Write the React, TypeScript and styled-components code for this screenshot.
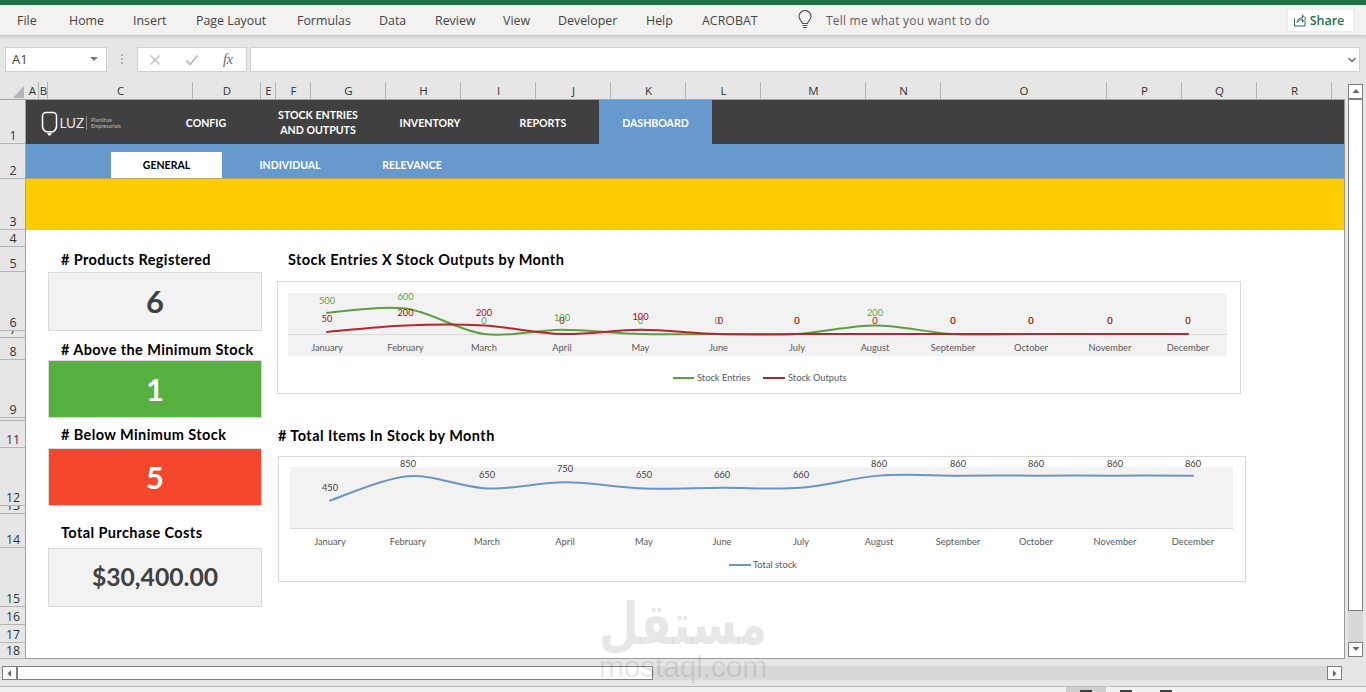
import React from "react";
import styled, { createGlobalStyle } from "styled-components";

const Global = createGlobalStyle`
  html, body { margin: 0; padding: 0; background: #e6e6e6; }
  * { box-sizing: border-box; }
`;

const Page = styled.div`
  width: 1366px; height: 692px; overflow: hidden; position: relative;
  display: flex; flex-direction: column; background: #e6e6e6;
  font-family: "Open Sans", "Noto Sans", sans-serif;
`;
const GreenStrip = styled.div`height: 5px; background: #217346;`;
const Ribbon = styled.div`
  height: 30px; background: #f3f2f1; display: flex; align-items: center;
  padding-left: 17px; position: relative; z-index: 1;
  box-shadow: 0 2px 3px rgba(0,0,0,.14);
`;
const RibbonTab = styled.div<{ $w: number }>`
  width: ${p => p.$w}px; flex: none; font-size: 12.4px; color: #444; white-space: nowrap;
`;
const TellMe = styled.div`
  display: flex; align-items: center; gap: 13px; width: 490px; flex: none;
  font-size: 12px; color: #5f5f5f; letter-spacing: .22px;
`;
const ShareButton = styled.div`
  width: 67px; height: 23px; background: #fff; border: 1px solid #ececec; border-radius: 2px;
  display: flex; align-items: center; justify-content: center; gap: 3px; padding-right: 4px;
  color: #217346; font-size: 12.5px; font-weight: 600;
`;

const FormulaRow = styled.div`
  height: 45px; display: flex; align-items: flex-start; padding: 12px 6px 0 5px;
`;
const Field = styled.div`
  height: 25px; background: #fff; border: 1px solid #d2d2d2;
  display: flex; align-items: center;
`;
const NameBox = styled(Field)`
  width: 102px; flex: none; padding: 0 8px 2px 6px; justify-content: space-between;
  font-size: 13px; color: #444;
`;
const Caret = styled.span`
  width: 0; height: 0; border-left: 4px solid transparent; border-right: 4px solid transparent;
  border-top: 4px solid #7b7b7b;
`;
const Dots = styled.div`
  width: 30px; flex: none; display: flex; flex-direction: column; align-items: center; gap: 2px; padding-top: 7px;
`;
const Dot = styled.span`width: 2px; height: 2px; background: #b4b4b4;`;
const FxBox = styled(Field)`
  width: 110px; flex: none; margin-right: 3px; justify-content: space-between; padding: 0 13px 0 11px;
`;
const Fx = styled.span`
  font-family: "Liberation Serif", serif; font-style: italic; font-size: 14px; color: #666;
`;
const FormulaInput = styled(Field)`
  width: 1110px; flex: none; justify-content: flex-end; padding-right: 2px;
`;

const Grid = styled.div`display: flex; height: 579px; flex: none;`;
const GridMain = styled.div`width: 1345px; flex: none; display: flex; flex-direction: column;`;

const ColumnBar = styled.div`
  height: 20px; flex: none; display: flex; border-bottom: 1px solid #a3a3a3; background: #e6e6e6;
`;
const Corner = styled.div`
  width: 26px; flex: none; display: flex; align-items: flex-end; justify-content: flex-end;
  padding: 0 2px 1px 0;
`;
const ColumnCell = styled.div<{ $w: number }>`
  width: ${p => p.$w}px; flex: none; display: flex; align-items: center; justify-content: center;
  font-size: 11.5px; color: #333; position: relative; line-height: 18px; padding-top: 3px;
  &::after { content: ""; position: absolute; right: 0; top: 2px; bottom: 0; width: 1px; background: #b4b4b4; }
`;

const Workspace = styled.div`height: 559px; flex: none; display: flex;`;
const RowBar = styled.div`width: 26px; flex: none; display: flex; flex-direction: column; background: #e6e6e6; border-right: 1px solid #a3a3a3;`;
const RowCell = styled.div<{ $h: number }>`
  height: ${p => p.$h}px; flex: none; overflow: hidden; display: flex; align-items: flex-end; justify-content: center;
  border-bottom: 1px solid #b4b4b4; font-size: 12.4px; line-height: 14px; color: #333; padding-left: 1px;
`;

const Sheet = styled.div`
  width: 1319px; flex: none; background: #fff; display: flex; flex-direction: column; overflow: hidden;
  border-bottom: 1px solid #9a9a9a; border-right: 1px solid #9a9a9a;
  font-family: Lato, "Open Sans", sans-serif;
`;
const NavBar = styled.div`height: 44px; flex: none; background: #404040; display: flex;`;
const Brand = styled.div`width: 123px; flex: none; display: flex; align-items: center; padding-left: 15px; padding-top: 1px;`;
const NavItem = styled.div<{ $w: number; $active?: boolean }>`
  width: ${p => p.$w}px; flex: none; display: flex; align-items: center; justify-content: center; text-align: center;
  color: #fff; font-weight: 700; font-size: 10.6px; line-height: 15px; padding-top: 2px;
  background: ${p => (p.$active ? "#6699cc" : "transparent")};
`;
const SubNav = styled.div`
  height: 35px; flex: none; background: #6699cc; display: flex; padding-left: 85px; align-items: flex-end;
  border-bottom: 1px solid #b9a768;
`;
const SubTab = styled.div<{ $w: number; $active?: boolean }>`
  width: ${p => p.$w}px; height: 26px; flex: none; display: flex; align-items: center; justify-content: center;
  font-weight: 700; font-size: 10.5px;
  color: ${p => (p.$active ? "#000" : "#fff")};
  background: ${p => (p.$active ? "#fff" : "transparent")};
`;
const Banner = styled.div`height: 51px; flex: none; background: #ffcc00;`;
const Body = styled.div`flex: 1; display: flex; padding-left: 22px;`;
const Stats = styled.div`width: 214px; flex: none; display: flex; flex-direction: column;`;
const StatLabel = styled.div<{ $h: number; $top: number }>`
  height: ${p => p.$h}px; margin-top: ${p => p.$top}px; padding-left: 13px; display: flex; align-items: center;
  font-weight: 700; font-size: 14.5px; letter-spacing: .4px; color: #000; white-space: nowrap;
`;
const StatCard = styled.div<{ $h: number; $bg: string; $fg: string; $size: number }>`
  height: ${p => p.$h}px; background: ${p => p.$bg}; color: ${p => p.$fg};
  border: 1px solid #dadada; display: flex; align-items: center; justify-content: center;
  font-weight: 700; font-size: ${p => p.$size}px; line-height: 1;
`;
const Charts = styled.div`margin-left: 15px; padding-top: 17px; display: flex; flex-direction: column;`;
const ChartTitle = styled.div<{ $left: number; $top: number; $h: number }>`
  height: ${p => p.$h}px; margin-top: ${p => p.$top}px; padding-left: ${p => p.$left}px; display: flex; align-items: center;
  font-weight: 700; font-size: 14.5px; letter-spacing: .43px; color: #000; white-space: nowrap;
`;
const ChartFrame = styled.div<{ $w: number; $h: number; $left: number; $top: number }>`
  width: ${p => p.$w}px; height: ${p => p.$h}px; margin-left: ${p => p.$left}px; margin-top: ${p => p.$top}px;
  border: 1px solid #d9d9d9; background: #fff;
`;
const ChartSvg = styled.svg`display: block; width: 100%; height: 100%;`;
const ChartText = styled.text<{ $fill: string }>`
  font-family: Lato, "Open Sans", sans-serif; font-size: 9.3px; fill: ${p => p.$fill};
`;

const VScroll = styled.div`
  flex: 1; display: flex; flex-direction: column; padding: 4px 3px 2px 3px; background: #e6e6e6;
`;
const ScrollButton = styled.div<{ $vertical?: boolean }>`
  flex: none; background: #fff; border: 1px solid #7f7f7f; display: flex; align-items: center; justify-content: center;
  width: ${p => (p.$vertical ? "100%" : "15px")}; height: ${p => (p.$vertical ? "15px" : "100%")};
`;
const VThumb = styled.div`flex: none; height: 513px; background: #fff; border: 1px solid #7f7f7f; border-top-width: 2px; margin-top: -1px;`;
const VTrack = styled.div`flex: 1; background: #d8d8d8;`;
const HScrollRow = styled.div`
  height: 28px; flex: none; display: flex; padding: 7px 24px 6px 2px; background: #e6e6e6;
  border-bottom: 1px solid #bdbdbd;
`;
const HThumb = styled.div`width: 636px; flex: none; background: #fff; border: 1px solid #7f7f7f;`;
const HTrack = styled.div`flex: 1; background: #d8d8d8;`;
const StatusBar = styled.div`flex: 1; background: #f1f1f1; display: flex; padding-left: 1066px;`;
const ViewButton = styled.div<{ $active?: boolean }>`
  width: 40px; display: flex; justify-content: center; align-items: flex-start; padding-top: 3px;
  background: ${p => (p.$active ? "#cfcfcf" : "transparent")};
`;
const ViewMark = styled.span`width: 12px; height: 2px; background: #3f3f3f;`;

const Watermark = styled.div`
  position: absolute; left: 600px; top: 594px; width: 166px; display: flex; flex-direction: column; align-items: center;
  color: rgba(60,60,60,.12); pointer-events: none; z-index: 5; line-height: 1;
`;
const WatermarkArabic = styled.div`
  font-family: "DejaVu Sans", sans-serif; font-weight: 700; font-size: 46px; line-height: 60px; height: 60px; white-space: nowrap;
  transform: scaleY(1.25);
`;
const WatermarkLatin = styled.div`
  font-family: "Liberation Sans", sans-serif; font-size: 30px; line-height: 26px; white-space: nowrap; letter-spacing: -.2px;
`;

const tabs: [string, number][] = [
  ["File", 52], ["Home", 64], ["Insert", 63], ["Page Layout", 101], ["Formulas", 82], ["Data", 56],
  ["Review", 68], ["View", 55], ["Developer", 88], ["Help", 56], ["ACROBAT", 95],
];
const columns: [string, number][] = [
  ["A", 13], ["B", 9], ["C", 145], ["D", 68], ["E", 15], ["F", 35], ["G", 75], ["H", 75], ["I", 75], ["J", 75],
  ["K", 75], ["L", 75], ["M", 105], ["N", 75], ["O", 166], ["P", 75], ["Q", 75], ["R", 75],
];
const rows = [44, 35, 51, 17, 25, 59, 7, 22, 58, 3, 27, 58, 8, 34, 59, 18, 18, 16];
const months = ["January", "February", "March", "April", "May", "June", "July", "August", "September", "October", "November", "December"];

type Pt = [number, number];
function smooth(pts: Pt[]): string {
  let d = `M${pts[0][0]} ${pts[0][1]}`;
  for (let i = 0; i < pts.length - 1; i++) {
    const p0 = pts[Math.max(i - 1, 0)], p1 = pts[i], p2 = pts[i + 1], p3 = pts[Math.min(i + 2, pts.length - 1)];
    const c1: Pt = [p1[0] + (p2[0] - p0[0]) / 6, p1[1] + (p2[1] - p0[1]) / 6];
    const c2: Pt = [p2[0] - (p3[0] - p1[0]) / 6, p2[1] - (p3[1] - p1[1]) / 6];
    d += ` C${c1[0].toFixed(1)} ${c1[1].toFixed(1)} ${c2[0].toFixed(1)} ${c2[1].toFixed(1)} ${p2[0]} ${p2[1]}`;
  }
  return d;
}

interface Series { color: string; labelColor: string; width?: number; ys: number[]; values: number[]; labelYs: number[]; labelDx?: Record<number, number>; }
interface ChartProps {
  box: [number, number, number, number];
  plot: [number, number, number, number];
  axisY: number; xs: number[]; monthY: number;
  series: Series[];
  legend: { color: string; x1: number; x2: number; tx: number; label: string }[];
  legendY: number;
}

function LineChart({ box, plot, axisY, xs, monthY, series, legend, legendY }: ChartProps) {
  const [bx, by, bw, bh] = box;
  return (
    <ChartSvg viewBox={`${bx + 1} ${by + 1} ${bw - 2} ${bh - 2}`}>
      <rect x={plot[0]} y={plot[1]} width={plot[2]} height={plot[3]} fill="#f2f2f2" />
      <line x1={plot[0]} x2={plot[0] + plot[2]} y1={axisY} y2={axisY} stroke="#d9d9d9" strokeWidth="1" />
      {series.map(s => (
        <path key={s.color} d={smooth(s.ys.map((y, i) => [xs[i], y] as Pt))} fill="none" stroke={s.color} strokeWidth={s.width ?? 2} strokeLinecap="round" />
      ))}
      {series.map(s => s.values.map((v, i) => (
        <ChartText key={s.color + i} $fill={s.labelColor} x={xs[i] + (s.labelDx?.[i] ?? 0)} y={s.labelYs[i]} textAnchor="middle">{v}</ChartText>
      )))}
      {months.map((m, i) => (
        <ChartText key={m} $fill="#595959" x={xs[i]} y={monthY} textAnchor="middle">{m}</ChartText>
      ))}
      {legend.map(l => (
        <g key={l.label}>
          <line x1={l.x1} x2={l.x2} y1={legendY} y2={legendY} stroke={l.color} strokeWidth="2" />
          <ChartText $fill="#595959" x={l.tx} y={legendY + 3}>{l.label}</ChartText>
        </g>
      ))}
    </ChartSvg>
  );
}

const xs1 = [327, 405.5, 484, 562, 640.5, 718.5, 797, 875, 953, 1031, 1110, 1188];
const xs2 = [330, 408, 487, 565, 644, 722, 801, 879, 958, 1036, 1115, 1193];
const y0 = 334;
const entries = [500, 600, 0, 100, 0, 0, 0, 200, 0, 0, 0, 0];
const outputs = [50, 200, 200, 0, 100, 0, 0, 0, 0, 0, 0, 0];
const totals = [450, 850, 650, 750, 650, 660, 660, 860, 860, 860, 860, 860];

const chartOne: ChartProps = {
  box: [277, 281, 964, 113], plot: [288, 293, 939, 63], axisY: 334.5, xs: xs1, monthY: 351,
  series: [
    {
      color: "#5b9f40", labelColor: "#55a838", values: entries, ys: entries.map(v => y0 - v * 0.0425),
      labelYs: [303.5, 299.5, 324, 321, 324, 324, 324, 316, 324, 324, 324, 324],
      labelDx: { 5: -1 },
    },
    {
      color: "#b3272d", labelColor: "#c00000", values: outputs, ys: outputs.map(v => y0 - v * 0.0425),
      labelYs: [322, 316, 316, 324, 320, 324, 324, 324, 324, 324, 324, 324],
      labelDx: { 5: 2 },
    },
  ],
  legend: [
    { color: "#5b9f40", x1: 673, x2: 694, tx: 697, label: "Stock Entries" },
    { color: "#a52a2e", x1: 763, x2: 785, tx: 788, label: "Stock Outputs" },
  ],
  legendY: 378,
};
const chartTwo: ChartProps = {
  box: [278, 456, 968, 126], plot: [290, 467, 943, 61], axisY: 528.5, xs: xs2, monthY: 545,
  series: [{
    color: "#6f94bd", labelColor: "#404040", values: totals, ys: totals.map(v => 528 - v * 0.0609),
    labelYs: [491, 467, 478, 472, 478, 478, 478, 467, 467, 467, 467, 467],
  }],
  legend: [{ color: "#6f94bd", x1: 729, x2: 751, tx: 753, label: "Total stock" }],
  legendY: 565,
};

const Logo = () => (
  <svg width="92" height="26" viewBox="0 0 92 26" fill="none" aria-hidden="true">
    <path d="M5 2.500h7a3.500 3.500 0 0 1 3.500 3.500v10.500a6.500 6.500 0 0 1-3.500 5.300H5a6.500 6.500 0 0 1-3.500-5.300V6A3.500 3.500 0 0 1 5 2.500Z" stroke="#fff" strokeWidth="1.500" />
    <path d="M6 23h5l-1.500 2.500h-2Z" fill="#fff" />
    <text x="18.500" y="18" fontFamily="Lato, sans-serif" fontSize="13.500" fill="#e8e8e8">LUZ</text>
    <line x1="45.500" y1="6" x2="45.500" y2="20" stroke="#8a8a8a" />
    <text x="50" y="12" fontFamily="Lato, sans-serif" fontSize="5.400" fill="#bdbdbd">Planilhas</text>
    <text x="50" y="18" fontFamily="Lato, sans-serif" fontSize="5.400" fill="#bdbdbd">Empresariais</text>
  </svg>
);
const Bulb = () => (
  <svg width="16" height="20" viewBox="0 0 16 20" fill="none" stroke="#555" strokeWidth="1.100" aria-hidden="true">
    <path d="M5.500 13.500C5.200 11 2 9.800 2 6.500a6 6 0 0 1 12 0c0 3.300-3.200 4.500-3.500 7Z" />
    <path d="M5.500 15.500h5M6 17.500h4" />
  </svg>
);
const ShareIcon = () => (
  <svg width="14" height="14" viewBox="0 0 14 14" fill="none" stroke="#217346" strokeWidth="1" aria-hidden="true">
    <path d="M1.500 5.500v7.500h10.500V8" />
    <path d="M4 9.500C4.500 6.500 6.500 4.800 9.500 4.800V2.200L13 5.600 9.500 9V6.500C7 6.500 5.300 7.500 4 9.500Z" />
  </svg>
);
const Chevron = () => (
  <svg width="10" height="8" viewBox="0 0 10 8" fill="none" stroke="#777" strokeWidth="1.600" aria-hidden="true"><path d="M1.500 2 5 5.500 8.500 2" /></svg>
);
const CloseGlyph = () => (
  <svg width="12" height="12" viewBox="0 0 12 12" stroke="#bcbcbc" strokeWidth="1.400" aria-hidden="true"><path d="M1.500 1.500l9 9M10.500 1.500l-9 9" /></svg>
);
const CheckGlyph = () => (
  <svg width="14" height="12" viewBox="0 0 14 12" fill="none" stroke="#bcbcbc" strokeWidth="1.800" aria-hidden="true"><path d="M1.500 6.500 5 10.500 12.500 1.500" /></svg>
);
const CornerMark = () => (
  <svg width="11" height="12" viewBox="0 0 11 12" aria-hidden="true"><path d="M11 0v12H0Z" fill="#b5b5b5" /></svg>
);
const Arrow = ({ dir }: { dir: "up" | "down" | "left" | "right" }) => {
  const d = { up: "M4 1 7.500 5H.5Z", down: "M4 5 .5 1h7Z", left: "M1.500 3.500 5 0v7Z", right: "M5.500 3.500 2 0v7Z" }[dir];
  return <svg width="8" height="7" viewBox="0 0 8 7" aria-hidden="true"><path d={d} fill="#6a6a6a" /></svg>;
};

export default function App() {
  return (
    <Page>
      <Global />
      <GreenStrip />
      <Ribbon>
        {tabs.map(([label, w]) => <RibbonTab key={label} $w={w}>{label}</RibbonTab>)}
        <TellMe><Bulb />Tell me what you want to do</TellMe>
        <ShareButton><ShareIcon />Share</ShareButton>
      </Ribbon>
      <FormulaRow>
        <NameBox>A1<Caret /></NameBox>
        <Dots><Dot /><Dot /><Dot /></Dots>
        <FxBox><CloseGlyph /><CheckGlyph /><Fx>fx</Fx></FxBox>
        <FormulaInput><Chevron /></FormulaInput>
      </FormulaRow>
      <Grid>
        <GridMain>
          <ColumnBar>
            <Corner><CornerMark /></Corner>
            {columns.map(([c, w]) => <ColumnCell key={c} $w={w}>{c}</ColumnCell>)}
          </ColumnBar>
          <Workspace>
            <RowBar>
              {rows.map((h, i) => <RowCell key={i} $h={h}>{i + 1}</RowCell>)}
            </RowBar>
            <Sheet>
              <NavBar>
                <Brand><Logo /></Brand>
                <NavItem $w={114}>CONFIG</NavItem>
                <NavItem $w={110}>STOCK ENTRIES<br />AND OUTPUTS</NavItem>
                <NavItem $w={114}>INVENTORY</NavItem>
                <NavItem $w={112}>REPORTS</NavItem>
                <NavItem $w={113} $active>DASHBOARD</NavItem>
              </NavBar>
              <SubNav>
                <SubTab $w={111} $active>GENERAL</SubTab>
                <SubTab $w={136}>INDIVIDUAL</SubTab>
                <SubTab $w={108}>RELEVANCE</SubTab>
              </SubNav>
              <Banner />
              <Body>
                <Stats>
                  <StatLabel $h={25} $top={17}># Products Registered</StatLabel>
                  <StatCard $h={59} $bg="#f2f2f2" $fg="#404040" $size={31}>6</StatCard>
                  <StatLabel $h={21} $top={8}># Above the Minimum Stock</StatLabel>
                  <StatCard $h={58} $bg="#55b03f" $fg="#fff" $size={31}>1</StatCard>
                  <StatLabel $h={27} $top={3}># Below Minimum Stock</StatLabel>
                  <StatCard $h={58} $bg="#f4472c" $fg="#fff" $size={31}>5</StatCard>
                  <StatLabel $h={32} $top={10}>Total Purchase Costs</StatLabel>
                  <StatCard $h={59} $bg="#f2f2f2" $fg="#404040" $size={24.7}>$30,400.00</StatCard>
                </Stats>
                <Charts>
                  <ChartTitle $left={11} $top={0} $h={25}>Stock Entries X Stock Outputs by Month</ChartTitle>
                  <ChartFrame $w={964} $h={113} $left={0} $top={9}><LineChart {...chartOne} /></ChartFrame>
                  <ChartTitle $left={1} $top={29} $h={24}># Total Items In Stock by Month</ChartTitle>
                  <ChartFrame $w={968} $h={126} $left={1} $top={9}><LineChart {...chartTwo} /></ChartFrame>
                </Charts>
              </Body>
            </Sheet>
          </Workspace>
        </GridMain>
        <VScroll>
          <ScrollButton $vertical><Arrow dir="up" /></ScrollButton>
          <VThumb />
          <VTrack />
          <ScrollButton $vertical><Arrow dir="down" /></ScrollButton>
        </VScroll>
      </Grid>
      <HScrollRow>
        <ScrollButton><Arrow dir="left" /></ScrollButton>
        <HThumb />
        <HTrack />
        <ScrollButton><Arrow dir="right" /></ScrollButton>
      </HScrollRow>
      <StatusBar>
        <ViewButton $active><ViewMark /></ViewButton>
        <ViewButton><ViewMark /></ViewButton>
        <ViewButton><ViewMark /></ViewButton>
      </StatusBar>
      <Watermark>
        <WatermarkArabic>مستقل</WatermarkArabic>
        <WatermarkLatin>mostaql.com</WatermarkLatin>
      </Watermark>
    </Page>
  );
}
